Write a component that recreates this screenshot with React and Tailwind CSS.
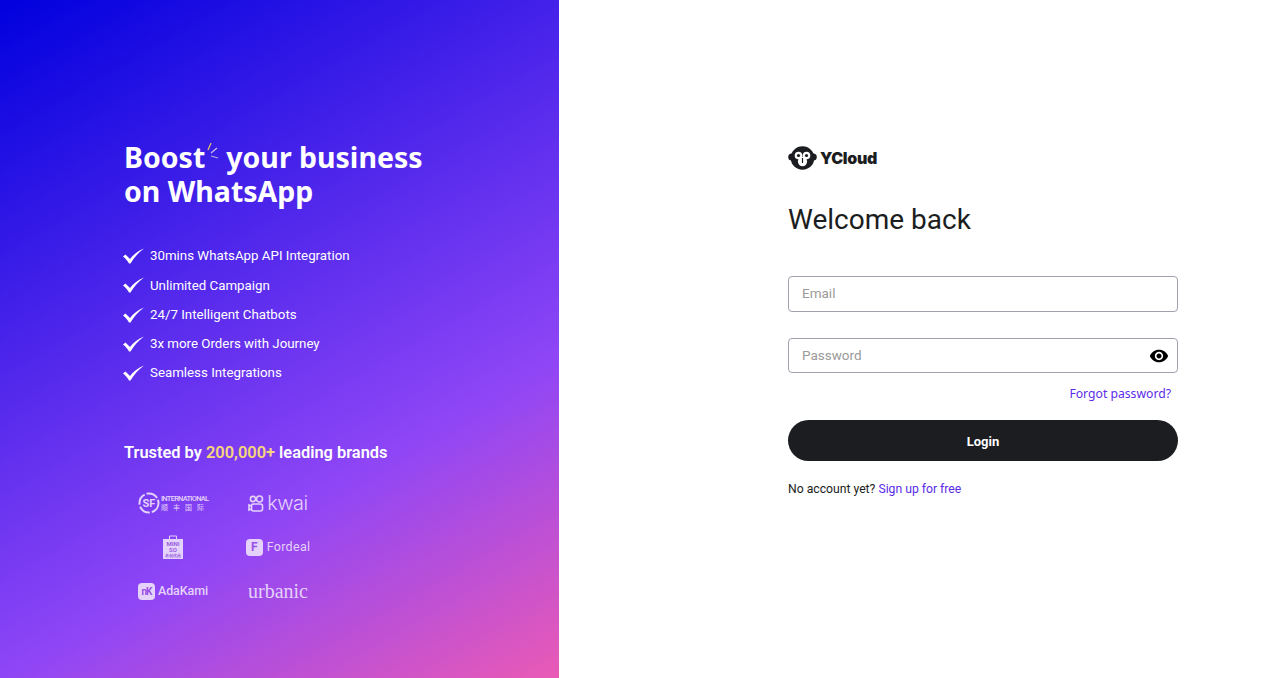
import React from "react";

const features = [
  "30mins WhatsApp API Integration",
  "Unlimited Campaign",
  "24/7 Intelligent Chatbots",
  "3x more Orders with Journey",
  "Seamless Integrations",
];

const Check = () => (
  <svg width="22" height="16" viewBox="0 0 22 16" fill="white" className="shrink-0 -ml-[1px]">
    <path d="M0 8.5 L2.5 6.5 L7 11 C10.5 6.5 15 3 21 0.5 C15.5 4.5 11 9.5 7.5 15.5 L6 15.5 C4.5 12.5 2.5 10.5 0 8.5 Z" />
  </svg>
);

const SfLogo = () => (
  <div className="flex items-center gap-[1px] text-[#e4d2fb]">
    <svg width="22" height="22" viewBox="0 0 22 22" fill="none" stroke="currentColor" strokeWidth="2">
      <circle cx="11" cy="11" r="9.5" strokeDasharray="12 2" />
      <text x="11" y="15" textAnchor="middle" fontSize="11" fontWeight="700" fill="currentColor" stroke="none" fontFamily="Roboto, sans-serif">SF</text>
    </svg>
    <div className="flex flex-col leading-none font-['Roboto',sans-serif] w-[47px]">
      <span className="text-[7.5px] font-medium tracking-[-0.75px] whitespace-nowrap">INTERNATIONAL</span>
      <span className="text-[7px] mt-[2px] tracking-[5px] whitespace-nowrap font-['Noto_Sans_CJK_SC',sans-serif]">顺丰国际</span>
    </div>
  </div>
);

const KwaiLogo = () => (
  <div className="flex items-center gap-[3px] text-[#e4d2fb]">
    <svg width="16" height="17" viewBox="0 0 16 17" fill="none" stroke="currentColor" strokeWidth="1.6">
      <circle cx="5" cy="4" r="2.6" />
      <circle cx="11.5" cy="4" r="3" />
      <rect x="3.5" y="9" width="11" height="7" rx="2" />
      <path d="M3.5 11 L1 10 V15 L3.5 14" />
    </svg>
    <span className="text-[20px] leading-none font-['Inter',sans-serif] font-light tracking-[-0.5px]">kwai</span>
  </div>
);

const MinisoLogo = () => (
  <div className="w-[20px] h-[24px] flex flex-col items-center">
    <svg width="10" height="4" viewBox="0 0 10 4" fill="none" stroke="#e4d2fb" strokeWidth="1" className="shrink-0">
      <path d="M1.5 4 V1 H8.5 V4" />
    </svg>
    <div className="w-[20px] h-[20px] shrink-0 bg-[#e4d2fb] flex flex-col items-center justify-center leading-[6px] text-[#9a5ee0] font-['Roboto',sans-serif] text-[6px] font-bold">
      <span>MINI</span>
      <span>SO</span>
      <span className="text-[4px] leading-[5px]">名创优品</span>
    </div>
  </div>
);

const FordealLogo = () => (
  <div className="flex items-center gap-[4px] text-[#e4d2fb]">
    <div className="w-[17px] h-[17px] rounded-[4px] bg-[#e4d2fb] flex items-center justify-center text-[#9a50e4] text-[12px] font-bold font-['Roboto',sans-serif]">F</div>
    <span className="text-[12.5px] leading-none font-['Roboto',sans-serif] tracking-[0.3px]">Fordeal</span>
  </div>
);

const AdaKamiLogo = () => (
  <div className="flex items-center gap-[3px] text-[#e4d2fb]">
    <div className="w-[17px] h-[17px] rounded-[4px] bg-[#e4d2fb] flex items-center justify-center text-[#9a50e4] text-[10px] font-bold tracking-[-1px] font-['Roboto',sans-serif]">nK</div>
    <span className="text-[12.5px] leading-none font-medium font-['Roboto',sans-serif] tracking-[-0.1px]">AdaKami</span>
  </div>
);

const UrbanicLogo = () => (
  <span className="text-[#e4d2fb] text-[20px] leading-none font-['Liberation_Serif',serif]">urbanic</span>
);

const YCloudIcon = () => (
  <svg width="29" height="24" viewBox="0 0 29 24" className="shrink-0">
    <circle cx="3.8" cy="11" r="3.6" fill="#1b1d21" />
    <circle cx="25.2" cy="11" r="3.6" fill="#1b1d21" />
    <circle cx="14.5" cy="12" r="11.8" fill="#1b1d21" />
    <circle cx="10.5" cy="9.5" r="3.8" fill="white" />
    <circle cx="18.5" cy="9.5" r="3.8" fill="white" />
    <ellipse cx="14.5" cy="15.5" rx="4.6" ry="4.8" fill="white" />
    <circle cx="10.5" cy="9.5" r="1.6" fill="#1b1d21" />
    <circle cx="18.5" cy="9.5" r="1.6" fill="#1b1d21" />
    <rect x="13.9" y="12" width="1.2" height="5" fill="#1b1d21" />
  </svg>
);

const App = () => {
  return (
    <div className="flex h-[678px] w-full overflow-hidden bg-white font-['Roboto',sans-serif]">
      {/* Left: marketing */}
      <div className="w-[559px] shrink-0 pl-[124px] pt-[140px] text-white bg-[linear-gradient(150deg,#0000de_0%,#8f46f6_68%,#ea5ab5_100%)]">
        <h1 className="text-[28.5px] leading-[34px] font-bold font-['Noto_Sans',sans-serif]">
          <span className="block h-[34px] whitespace-nowrap">
            <span className="relative inline-block">
              Boost
              <svg className="absolute -right-[15px] top-[3px]" width="14" height="16" viewBox="0 0 14 16" fill="none" strokeWidth="1.2">
                <path d="M2 7 L5 0" stroke="#e8c860" />
                <path d="M5 10 L11 5" stroke="#c9c3e8" />
                <path d="M5 13 L12 15" stroke="#b7a9d8" />
              </svg>
            </span>
            <span className="inline-block ml-[21px]">your business</span>
          </span>
          <span className="block h-[34px]">on WhatsApp</span>
        </h1>

        <ul className="mt-[33.6px] flex flex-col">
          {features.map((text) => (
            <li key={text} className="flex items-center gap-[5px] h-[29.25px] text-[13.3px] font-normal">
              <Check />
              <span>{text}</span>
            </li>
          ))}
        </ul>

        <p className="mt-[53.4px] text-[16.4px] leading-[24px] font-semibold">
          Trusted by <span className="text-[#f6d67c]">200,000+</span> leading brands
        </p>

        <div className="mt-[16px] grid grid-cols-[96px_96px] gap-x-[9px] ml-[1px]">
          <div className="h-[44px] flex items-center justify-center"><SfLogo /></div>
          <div className="h-[44px] flex items-center justify-center"><KwaiLogo /></div>
          <div className="h-[44px] flex items-center justify-center"><MinisoLogo /></div>
          <div className="h-[44px] flex items-center justify-center"><FordealLogo /></div>
          <div className="h-[44px] flex items-center justify-center"><AdaKamiLogo /></div>
          <div className="h-[44px] flex items-center justify-center"><UrbanicLogo /></div>
        </div>
      </div>

      {/* Right: form */}
      <div className="flex-1 pl-[229px] pt-[146px]">
        <div className="w-[390px]">
          <div className="flex items-center gap-[3px] h-[24px]">
            <YCloudIcon />
            <span className="text-[16px] leading-[24px] font-black font-['Inter',sans-serif] text-[#1b1d21] tracking-[-0.35px]">YCloud</span>
          </div>

          <h2 className="mt-[32px] text-[28px] leading-[36px] text-[#1b1d21]">Welcome back</h2>

          <div className="mt-[38px] h-[36px] rounded-[4px] border border-[#a39fae] flex items-center px-[13px] pb-[1px]">
            <input placeholder="Email" className="w-full outline-none text-[13.5px] placeholder:text-[#9a9a9a]" />
          </div>

          <div className="mt-[26px] h-[35px] rounded-[4px] border border-[#a39fae] flex items-center pl-[13px] pr-[8px]">
            <input placeholder="Password" className="w-full outline-none text-[13.5px] placeholder:text-[#9a9a9a]" />
            <svg width="20" height="20" viewBox="0 0 24 24" fill="black" className="shrink-0">
              <path d="M12 4.5C7 4.5 2.73 7.61 1 12c1.73 4.39 6 7.5 11 7.5s9.27-3.11 11-7.5c-1.73-4.39-6-7.5-11-7.5zM12 17c-2.76 0-5-2.24-5-5s2.24-5 5-5 5 2.24 5 5-2.24 5-5 5zm0-8c-1.66 0-3 1.34-3 3s1.34 3 3 3 3-1.34 3-3-1.34-3-3-3z" />
            </svg>
          </div>

          <div className="mt-[11px] pr-[7px] text-right text-[12.2px] leading-[20px] font-['Noto_Sans',sans-serif] text-[#5b2be8]">
            <a href="#">Forgot password?</a>
          </div>

          <button className="mt-[16px] w-full h-[41px] pt-[2px] rounded-full bg-[#1b1d21] text-white text-[13px] font-bold">
            Login
          </button>

          <p className="mt-[19px] text-[12.2px] leading-[18px] text-[#1b1d21]">
            No account yet? <a href="#" className="text-[#5b2be8]">Sign up for free</a>
          </p>
        </div>
      </div>
    </div>
  );
};

export default App;
